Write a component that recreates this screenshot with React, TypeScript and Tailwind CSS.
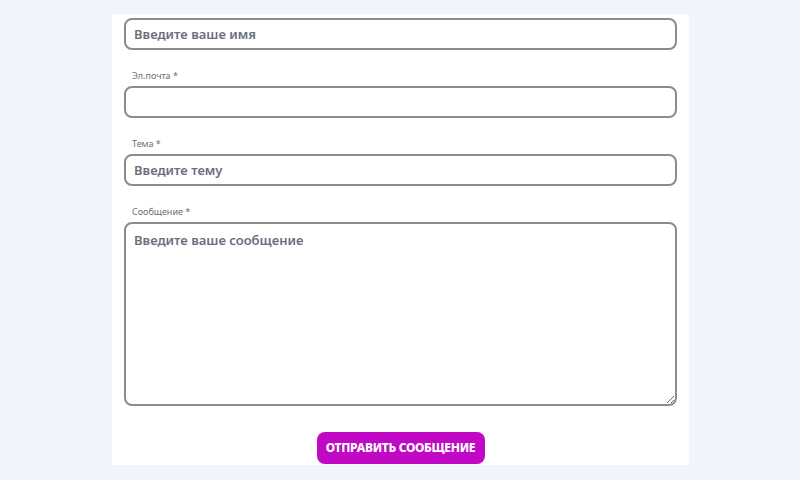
import React from 'react';

const font = { fontFamily: '"Noto Sans", "Liberation Sans", sans-serif' };

const inputCls =
  'w-full h-[32px] rounded-[8px] border-2 border-[#8c8c8c] bg-white px-[8px] text-[13px] font-semibold text-[#555566] placeholder:text-[#6d6d80] outline-none';

const Field: React.FC<{ label?: string; children: React.ReactNode }> = ({ label, children }) => (
  <div className="flex flex-col">
    {label && <label className="mb-[4px] pl-[8px] text-[9px] leading-[13px] text-[#6f6f6f]">{label}</label>}
    {children}
  </div>
);

const App: React.FC = () => {
  return (
    <div className="min-h-screen w-full bg-[#f1f4fd] pt-[14px]" style={font}>
      <div className="ml-[112px] w-[577px] bg-white px-[12px] pt-[4px] pb-[1px]">
        <form className="flex flex-col gap-[19px]" onSubmit={e => e.preventDefault()}>
          <Field>
            <input className={inputCls} placeholder="Введите ваше имя" />
          </Field>
          <Field label="Эл.почта *">
            <input className={inputCls} type="email" />
          </Field>
          <Field label="Тема *">
            <input className={inputCls} placeholder="Введите тему" />
          </Field>
          <Field label="Сообщение *">
            <textarea
              className="w-full h-[184px] rounded-[8px] border-2 border-[#8c8c8c] bg-white px-[8px] py-[7px] text-[13px] font-semibold text-[#555566] placeholder:text-[#6d6d80] outline-none"
              placeholder="Введите ваше сообщение"
            />
          </Field>
          <div className="flex justify-center pt-[7px]">
            <button
              type="submit"
              className="h-[32px] w-[168px] rounded-[8px] bg-[#c108c4] text-[12px] font-extrabold uppercase tracking-[-0.3px] text-white"
            >
              Отправить сообщение
            </button>
          </div>
        </form>
      </div>
    </div>
  );
};

export default App;
